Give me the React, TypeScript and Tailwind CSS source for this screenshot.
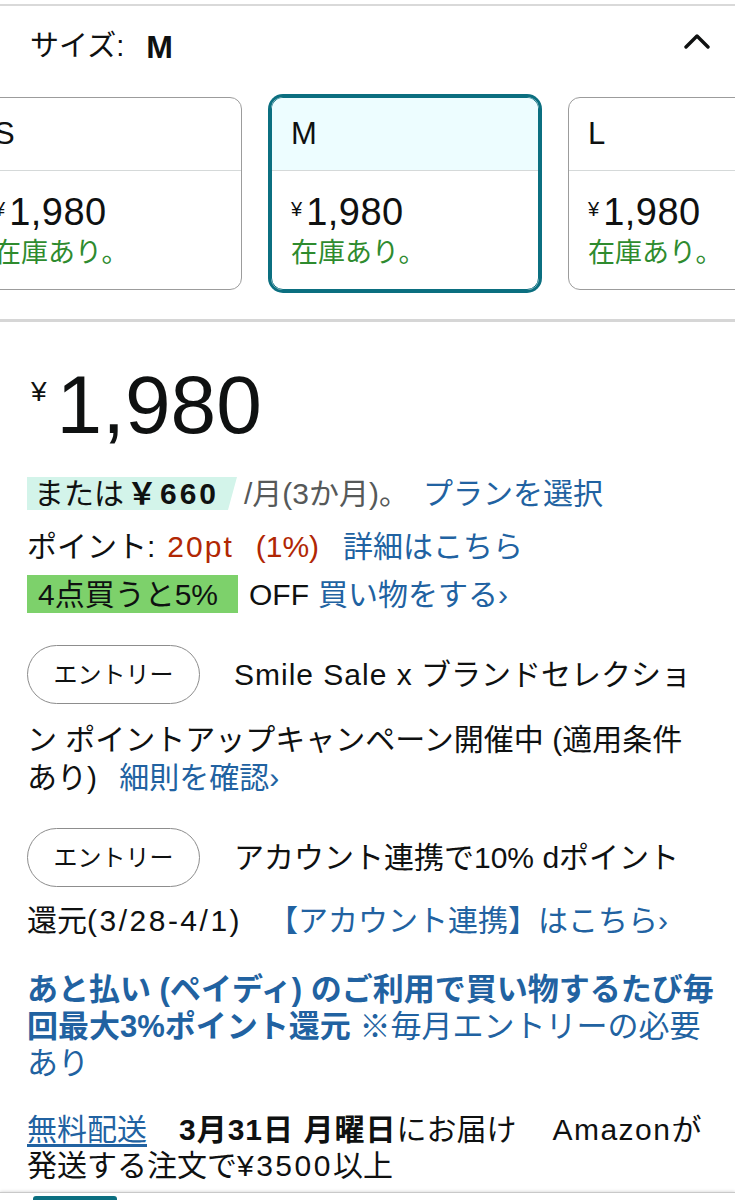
const sizes = [
  { label: 'S', price: '1,980', selected: false },
  { label: 'M', price: '1,980', selected: true },
  { label: 'L', price: '1,980', selected: false },
]

function SizeCard({ label, price, selected }: { label: string; price: string; selected: boolean }) {
  return (
    <div
      className={
        selected
          ? 'w-[268px] h-[193px] shrink-0 rounded-[12px] overflow-hidden border border-[#0b6f80] ring-3 ring-[#0b6f80]'
          : 'w-[268px] h-[193px] shrink-0 rounded-[12px] overflow-hidden border border-[#9c9c9c]'
      }
    >
      <div
        className={
          selected
            ? 'h-[73px] flex items-center px-[19px] border-b border-[#d5d9d9] bg-[#edfdff] text-[31px] font-medium'
            : 'h-[73px] flex items-center px-[19px] border-b border-[#d5d9d9] text-[31px] font-medium'
        }
      >
        {label}
      </div>
      <div className="px-[19px] pt-[22px]">
        <div className="flex items-start">
          <span className="text-[20px] leading-none mt-[6px]">¥</span>
          <span className="text-[38px] leading-[38px] ml-[4px] tracking-[0.5px]">{price}</span>
        </div>
        <div className="text-[27px] leading-[30px] text-[#2e8b2e] mt-[7px]">在庫あり。</div>
      </div>
    </div>
  )
}

function EntryPill() {
  return (
    <div className="w-[173px] h-[59px] shrink-0 rounded-full border border-[#8d8d8d] flex items-center justify-center text-[24px]">
      エントリー
    </div>
  )
}

export default function App() {
  return (
    <div className="w-[735px] min-h-[1200px] bg-white text-[#0f1111] font-['Liberation_Sans','Noto_Sans_CJK_JP',sans-serif]">
      <div className="pt-[4px]">
        <div className="h-[2px] bg-[#d9d9d9]" />
      </div>

      {/* size header */}
      <div className="h-[82px] flex items-center justify-between pl-[30px] pr-[25px]">
        <div className="flex items-center text-[29px]">
          サイズ:<span className="font-bold text-[32px] ml-[22px]">M</span>
        </div>
        <svg className="mb-[12px]" width="26" height="18" viewBox="0 0 26 18" fill="none">
          <polyline points="2,15 13,4 24,15" stroke="#0f1111" strokeWidth="3.4" strokeLinecap="round" strokeLinejoin="round" />
        </svg>
      </div>

      <div className="overflow-hidden pt-[9px] pb-[4px]">
        <div className="flex gap-[29px] ml-[-26px]">
          {sizes.map((s) => (
            <SizeCard key={s.label} {...s} />
          ))}
        </div>
      </div>

      <div className="mt-[25px] h-[3px] bg-[#d6d6d6]" />

      {/* price */}
      <div className="mt-[43px] flex items-start pl-[31px]">
        <span className="text-[28px] leading-none mt-[13px]">¥</span>
        <span className="text-[82px] leading-[80px] ml-[10px]">1,980</span>
      </div>

      <div className="px-[27px] text-[30px]">
        <div className="mt-[32px] h-[33px] flex items-center whitespace-nowrap">
          <span className="w-[210px] h-[33px] flex items-center pl-[7px] bg-[#d3f4ea] [clip-path:polygon(0_0,100%_0,calc(100%-9px)_100%,0_100%)]">
            または<span className="font-bold ml-[3px] tracking-[3px]">￥660</span>
          </span>
          <span className="ml-[7px] text-[#565959]">/月(3か月)。</span>
          <span className="ml-[14px] text-[#2162a1]">プランを選択</span>
        </div>

        <div className="mt-[18px] h-[36px] flex items-center whitespace-nowrap">
          <span>ポイント:</span>
          <span className="ml-[12px] text-[#b12704] tracking-[2px]">20pt</span>
          <span className="ml-[22px] text-[#b12704]">(1%)</span>
          <span className="ml-[24px] text-[#2162a1]">詳細はこちら</span>
        </div>

        <div className="mt-[11px] h-[38px] flex items-center whitespace-nowrap">
          <span className="w-[211px] h-[38px] flex items-center px-[11px] bg-[#7dd16b]">4点買うと5%</span>
          <span className="ml-[11px]">OFF</span>
          <span className="ml-[9px] text-[#2162a1]">買い物をする›</span>
        </div>

        <div className="mt-[32px] flex items-center whitespace-nowrap">
          <EntryPill />
          <span className="ml-[34px]">
            <span className="tracking-[1px]">Smile Sale x</span> ブランドセレクショ
          </span>
        </div>
        <p className="mt-[17px] leading-[38px] whitespace-nowrap">
          ン ポイントアップキャンペーン開催中 (適用条件
          <br />
          あり) <span className="ml-[14px] text-[#2162a1]">細則を確認›</span>
        </p>

        <div className="mt-[31px] flex items-center whitespace-nowrap">
          <EntryPill />
          <span className="ml-[34px]">アカウント連携で10% dポイント</span>
        </div>
        <p className="mt-[15px] leading-[38px] whitespace-nowrap">
          還元<span className="tracking-[2.5px]">(3/28-4/1)</span>
          <span className="ml-[26px] text-[#2162a1]">【アカウント連携】はこちら›</span>
        </p>

        <p className="mt-[31px] text-[31px] leading-[37px] text-[#2162a1] whitespace-nowrap">
          <span className="font-bold">
            あと払い (ペイディ) のご利用で買い物するたび毎
            <br />
            回最大3%ポイント還元
          </span>{' '}
          ※毎月エントリーの必要
          <br />
          あり
        </p>

        <p className="mt-[30px] leading-[36px] whitespace-nowrap">
          <span className="text-[#2162a1] underline underline-offset-4">無料配送</span>
          <span className="ml-[32px] font-bold tracking-[1px]">3月31日 月曜日</span>
          にお届け
          <span className="ml-[36px] tracking-[1.5px]">Amazonが</span>
          <br />
          発送する注文で<span className="tracking-[2.5px]">¥3500</span>以上
        </p>
      </div>

      {/* bottom bar peeking in */}
      <div className="fixed bottom-0 left-0 right-0 h-[8px] bg-white border-t border-[#c9c9c9] shadow-[0_-1px_3px_rgba(0,0,0,0.12)] pl-[33px] pt-[3px]">
        <div className="w-[84px] h-[5px] rounded-t-[3px] bg-[#0b6f80]" />
      </div>
    </div>
  )
}
